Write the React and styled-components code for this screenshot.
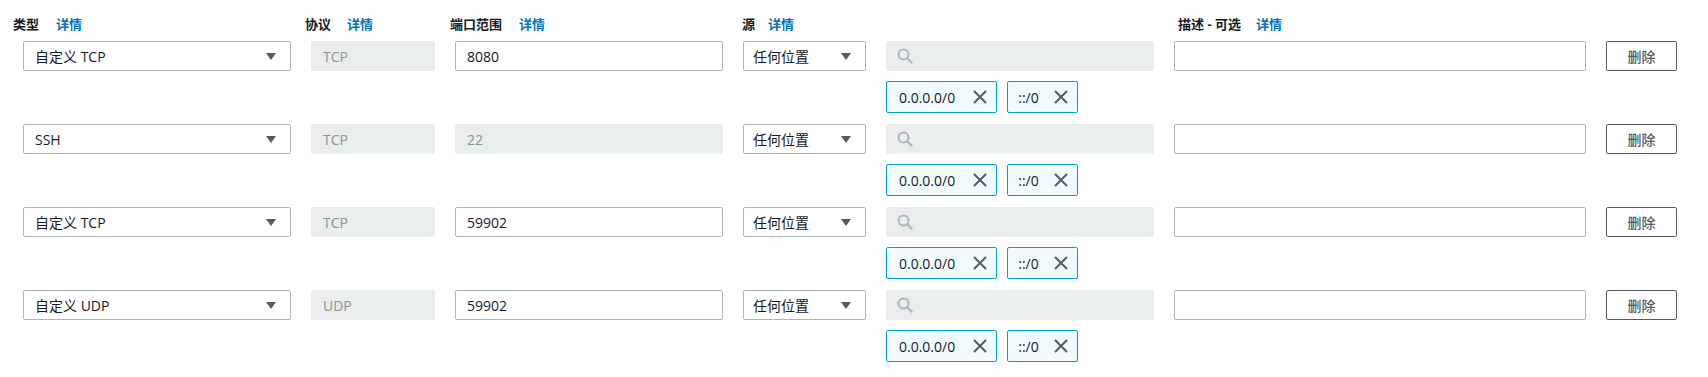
import React from "react";
import styled, { createGlobalStyle } from "styled-components";

const Global = createGlobalStyle`
  html, body { margin: 0; padding: 0; background: #fff; }
  body {
    font-family: "Open Sans", "Noto Sans CJK SC", sans-serif;
    color: #16191f;
  }
`;

const Page = styled.div`
  padding: 14px 0 0 0;
  width: 1708px;
`;

const Grid = styled.div`
  display: grid;
  grid-template-columns: 268px 124px 268px 123px 268px 412px 71px;
  column-gap: 20px;
  margin-left: 23px;
`;

const HeaderCell = styled.div`
  display: flex;
  align-items: center;
  height: 20px;
  margin-left: ${(p) => p.$offset || 0}px;
  margin-bottom: 7px;
  font-size: 13px;
  line-height: 20px;
  white-space: nowrap;
`;

const HeaderLabel = styled.span`
  font-weight: 700;
  color: #16191f;
`;

const InfoLink = styled.a`
  margin-left: ${(p) => p.$gap || 16}px;
  color: #0073bb;
  font-weight: 700;
  text-decoration: none;
`;

const Field = styled.div`
  box-sizing: border-box;
  height: 30px;
  display: flex;
  align-items: center;
  border-radius: 2px;
  font-size: 14px;
  padding: 0 ${(p) => (p.$select ? 14 : 10)}px 0 ${(p) => p.$pl || 11}px;
  border: 1px solid ${(p) => (p.$disabled ? "#eaeded" : "#aab7b8")};
  background: ${(p) => (p.$disabled ? "#eaeded" : "#fff")};
  color: ${(p) => (p.$disabled ? "#879596" : "#16191f")};
  justify-content: space-between;
  white-space: nowrap;
`;

const Arrow = styled.span`
  width: 0;
  height: 0;
  border-left: 5px solid transparent;
  border-right: 5px solid transparent;
  border-top: 7px solid #545b64;
`;

const SearchBox = styled(Field)`
  justify-content: flex-start;
  padding-left: 10px;
`;

const CidrCell = styled.div`
  display: flex;
  flex-direction: column;
`;

const TokenRow = styled.div`
  display: flex;
  gap: 10px;
  margin-top: 10px;
`;

const Token = styled.div`
  box-sizing: border-box;
  height: 32px;
  display: flex;
  align-items: center;
  padding: 0 9px 0 ${(p) => p.$pl || 11}px;
  gap: ${(p) => p.$gap || 15}px;
  border: 1px solid #00a1c9;
  border-radius: 2px;
  background: #f1faff;
  font-size: 14px;
  color: #16191f;
`;

const DeleteButton = styled.button`
  box-sizing: border-box;
  height: 30px;
  width: 71px;
  border: 1px solid #545b64;
  border-radius: 2px;
  background: #fff;
  color: #545b64;
  font-family: "Open Sans", "Noto Sans CJK SC", sans-serif;
  font-size: 14px;
  font-weight: 500;
  padding: 0;
  cursor: pointer;
`;

const RowGap = styled.div`
  grid-column: 1 / -1;
  height: 11px;
`;

const SearchIcon = () => (
  <svg width="16" height="16" viewBox="0 0 16 16" fill="none">
    <circle cx="6.5" cy="6.5" r="5" stroke="#aab7b8" strokeWidth="2" />
    <line x1="10.2" y1="10.2" x2="14.5" y2="14.5" stroke="#aab7b8" strokeWidth="2.2" strokeLinecap="round" />
  </svg>
);

const CloseIcon = () => (
  <svg width="14" height="14" viewBox="0 0 14 14" fill="none">
    <path d="M1 1L13 13M13 1L1 13" stroke="#545b64" strokeWidth="2" />
  </svg>
);

const rules = [
  { type: "自定义 TCP", proto: "TCP", port: "8080", portDisabled: false },
  { type: "SSH", proto: "TCP", port: "22", portDisabled: true },
  { type: "自定义 TCP", proto: "TCP", port: "59902", portDisabled: false },
  { type: "自定义 UDP", proto: "UDP", port: "59902", portDisabled: false },
];

const headers = [
  { label: "类型", offset: -10, gap: 17 },
  { label: "协议", offset: -6, gap: 16 },
  { label: "端口范围", offset: -5, gap: 17 },
  { label: "源", offset: -1, gap: 13 },
  { label: "", offset: 0 },
  { label: "描述 - 可选", offset: 4, gap: 15 },
  { label: "", offset: 0 },
];

export default function App() {
  return (
    <>
      <Global />
      <Page>
        <Grid>
          {headers.map((h, i) => (
            <HeaderCell key={i} $offset={h.offset}>
              {h.label && (
                <>
                  <HeaderLabel>{h.label}</HeaderLabel>
                  <InfoLink $gap={h.gap}>详情</InfoLink>
                </>
              )}
            </HeaderCell>
          ))}
          {rules.map((r, i) => (
            <React.Fragment key={i}>
              <div>
                <Field $select $pl={11}>
                  <span>{r.type}</span>
                  <Arrow />
                </Field>
              </div>
              <div>
                <Field $disabled>{r.proto}</Field>
              </div>
              <div>
                <Field $disabled={r.portDisabled}>{r.port}</Field>
              </div>
              <div>
                <Field $select $pl={9}>
                  <span>任何位置</span>
                  <Arrow />
                </Field>
              </div>
              <CidrCell>
                <SearchBox $disabled>
                  <SearchIcon />
                </SearchBox>
                <TokenRow>
                  <Token $pl={12} $gap={18}>
                    <span>0.0.0.0/0</span>
                    <CloseIcon />
                  </Token>
                  <Token $pl={10} $gap={15}>
                    <span>::/0</span>
                    <CloseIcon />
                  </Token>
                </TokenRow>
              </CidrCell>
              <div>
                <Field />
              </div>
              <div>
                <DeleteButton>删除</DeleteButton>
              </div>
              {i < rules.length - 1 && <RowGap />}
            </React.Fragment>
          ))}
        </Grid>
      </Page>
    </>
  );
}
